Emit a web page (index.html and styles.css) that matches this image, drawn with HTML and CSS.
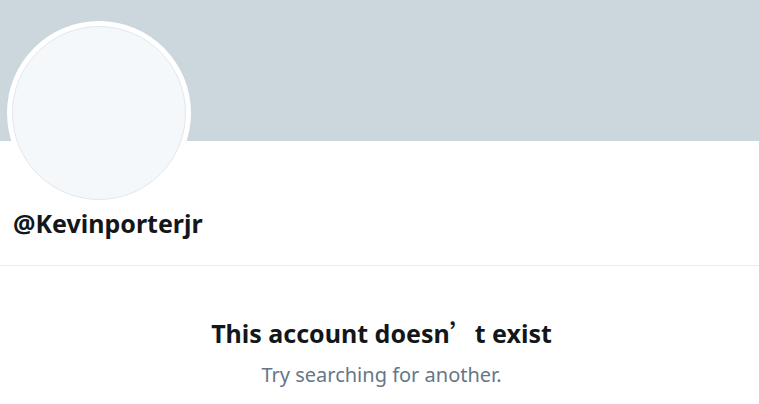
FILE: index.html
```html
<!DOCTYPE html>
<html>
<head>
<meta charset="utf-8">
<link rel="stylesheet" href="styles.css">
</head>
<body>
<div class="page">
  <div class="banner"></div>
  <div class="profile">
    <div class="avatar"><div class="avatar-inner"></div></div>
    <div class="handle">@Kevinporterjr</div>
  </div>
  <div class="empty">
    <div class="title">This account doesn<span class="quote">’</span>t exist</div>
    <div class="sub">Try searching for another.</div>
  </div>
</div>
</body>
</html>
```
FILE: styles.css
```css
html, body {
  margin: 0;
  padding: 0;
  background: #ffffff;
}
body {
  font-family: "Noto Sans", "Open Sans", sans-serif;
  color: #14171a;
}
.page {
  width: 759px;
}
.banner {
  height: 141px;
  background: #ccd6dd;
}
.profile {
  display: flex;
  flex-direction: column;
  align-items: flex-start;
  padding: 0 13px;
  border-bottom: 1px solid #e6ecf0;
  height: 125px;
  box-sizing: border-box;
}
.avatar {
  flex: none;
  width: 184px;
  height: 184px;
  margin: -120px 0 0 -6px;
  border-radius: 50%;
  background: #ffffff;
  padding: 5px;
  box-sizing: border-box;
}
.avatar-inner {
  width: 100%;
  height: 100%;
  border-radius: 50%;
  background: #f5f8fa;
  border: 1px solid #e1e8ed;
  box-sizing: border-box;
}
.handle {
  margin-top: 2px;
  font-size: 25px;
  font-weight: 700;
  line-height: 32px;
}
.empty {
  text-align: center;
  padding-top: 50px;
  padding-left: 4px;
}
.title {
  font-size: 25px;
  font-weight: 700;
  line-height: 32px;
}
.quote {
  font-family: "Noto Sans CJK SC", sans-serif;
}
.sub {
  margin-top: 13px;
  font-size: 20px;
  line-height: 26px;
  color: #657786;
}
```
